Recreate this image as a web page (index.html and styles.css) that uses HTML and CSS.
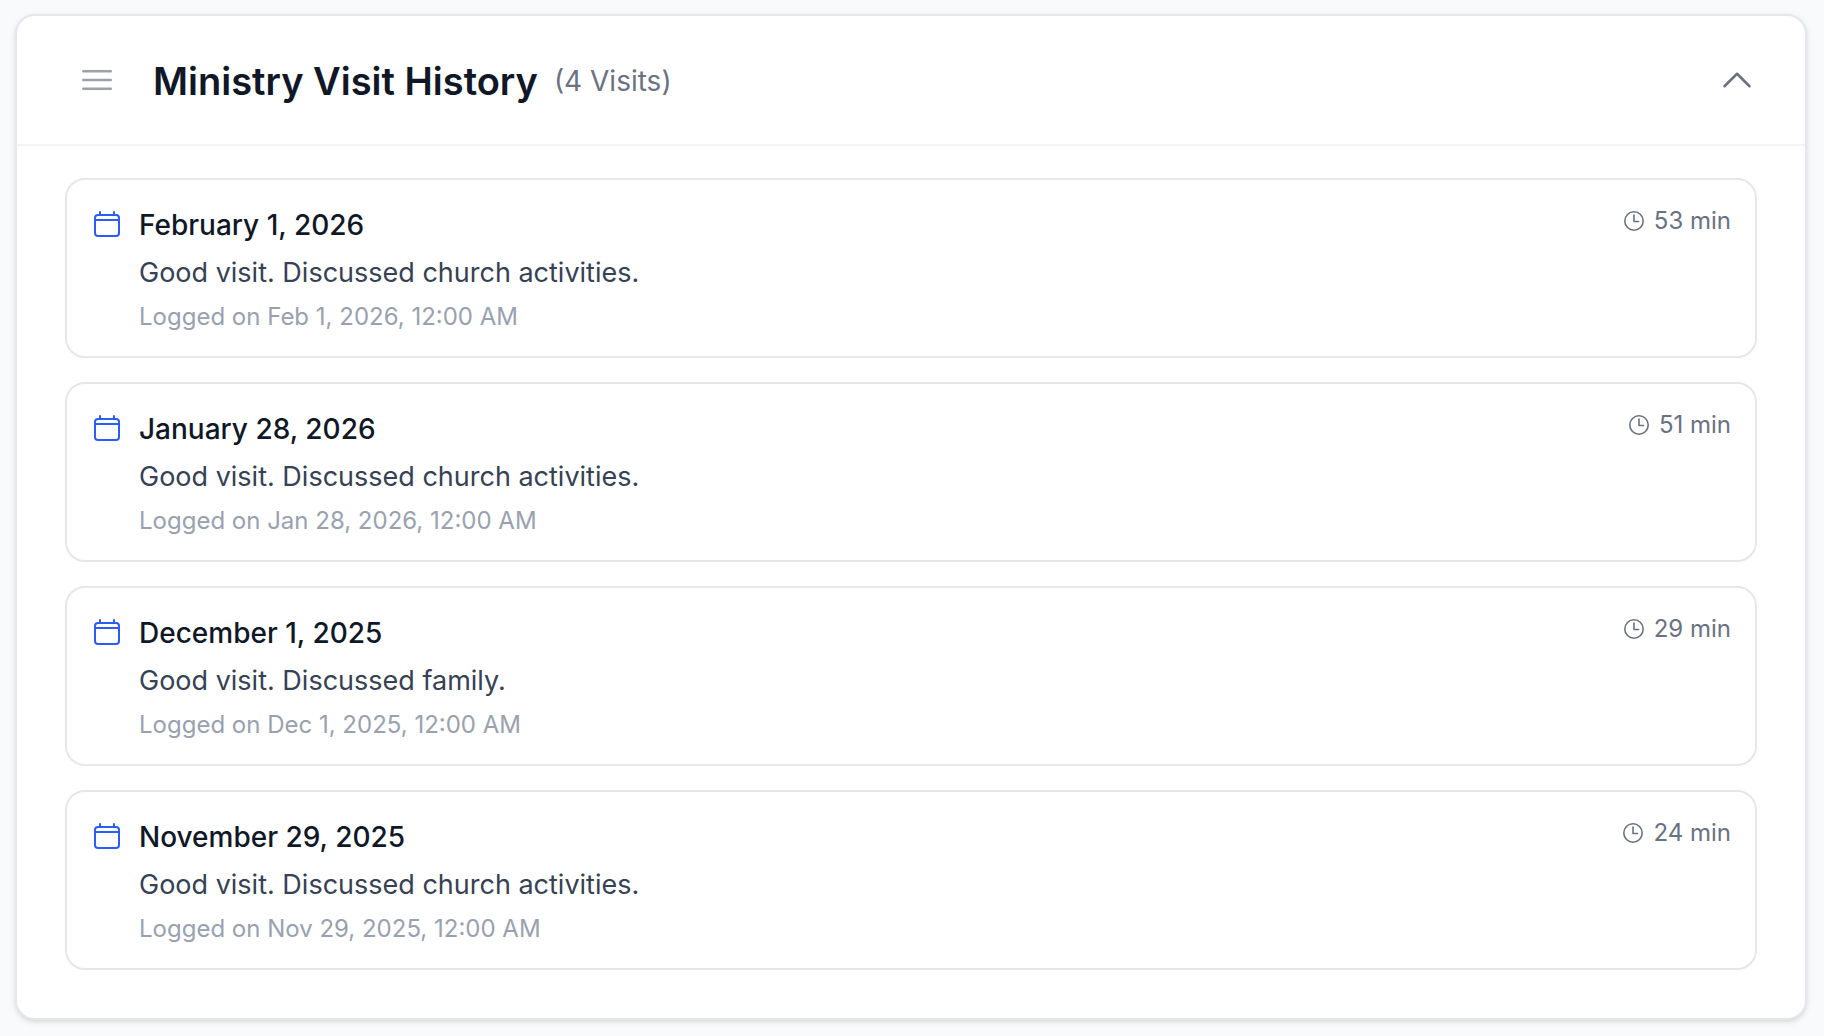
FILE: index.html
```html
<!DOCTYPE html>
<html lang="en">
<head>
    <meta charset="UTF-8">
    <meta name="viewport" content="width=device-width, initial-scale=1.0">
    <title>Ministry Visit History</title>
    <link rel="stylesheet" href="styles.css">
</head>
<body>

    <!-- Shared icons -->
    <svg class="icon-defs" aria-hidden="true">
        <symbol id="calendar" viewBox="0 0 32 32">
            <rect x="4" y="7" width="24" height="21" rx="3"></rect>
            <path d="M4 12h24M9 4v3M23 4v3"></path>
        </symbol>
        <symbol id="clock" viewBox="0 0 24 24">
            <circle cx="12" cy="12" r="9.2"></circle>
            <path d="M12 6v6.5h4.5"></path>
        </symbol>
    </svg>

    <section class="panel">
        <header class="panel-header">
            <button class="icon-button drag-handle" type="button" aria-label="Reorder section">
                <svg viewBox="0 0 24 24"><path d="M3.75 6.75h16.5M3.75 12h16.5M3.75 17.25h16.5"></path></svg>
            </button>
            <div class="panel-heading">
                <h2 class="panel-title">Ministry Visit History</h2>
                <span class="visit-count">(4 Visits)</span>
            </div>
            <button class="icon-button toggle" type="button" aria-label="Collapse section" aria-expanded="true">
                <svg viewBox="0 0 24 24"><path d="M4.5 15.75l7.5-7.5 7.5 7.5"></path></svg>
            </button>
        </header>

        <ul class="visit-list">
            <li class="visit">
                <svg class="calendar-icon"><use href="#calendar"></use></svg>
                <div class="visit-body">
                    <h3 class="visit-date">February 1, 2026</h3>
                    <p class="visit-notes">Good visit. Discussed church activities.</p>
                    <p class="visit-logged">Logged on Feb 1, 2026, 12:00 AM</p>
                </div>
                <div class="visit-duration">
                    <svg class="clock-icon"><use href="#clock"></use></svg>
                    <span>53 min</span>
                </div>
            </li>
            <li class="visit">
                <svg class="calendar-icon"><use href="#calendar"></use></svg>
                <div class="visit-body">
                    <h3 class="visit-date">January 28, 2026</h3>
                    <p class="visit-notes">Good visit. Discussed church activities.</p>
                    <p class="visit-logged">Logged on Jan 28, 2026, 12:00 AM</p>
                </div>
                <div class="visit-duration">
                    <svg class="clock-icon"><use href="#clock"></use></svg>
                    <span>51 min</span>
                </div>
            </li>
            <li class="visit">
                <svg class="calendar-icon"><use href="#calendar"></use></svg>
                <div class="visit-body">
                    <h3 class="visit-date">December 1, 2025</h3>
                    <p class="visit-notes">Good visit. Discussed family.</p>
                    <p class="visit-logged">Logged on Dec 1, 2025, 12:00 AM</p>
                </div>
                <div class="visit-duration">
                    <svg class="clock-icon"><use href="#clock"></use></svg>
                    <span>29 min</span>
                </div>
            </li>
            <li class="visit">
                <svg class="calendar-icon"><use href="#calendar"></use></svg>
                <div class="visit-body">
                    <h3 class="visit-date">November 29, 2025</h3>
                    <p class="visit-notes">Good visit. Discussed church activities.</p>
                    <p class="visit-logged">Logged on Nov 29, 2025, 12:00 AM</p>
                </div>
                <div class="visit-duration">
                    <svg class="clock-icon"><use href="#clock"></use></svg>
                    <span>24 min</span>
                </div>
            </li>
        </ul>
    </section>

</body>
</html>
```

FILE: styles.css
```css
* {
    box-sizing: border-box;
}

body {
    margin: 0;
    padding: 14px 17px 15px 15px;
    background-color: #f9fafb;
    color: #101828;
    font-family: Inter, sans-serif;
    font-size: 28px;
    line-height: 42px;
}

h2, h3, p, ul {
    margin: 0;
    padding: 0;
}

svg {
    display: block;
    flex-shrink: 0;
    fill: none;
    stroke: currentColor;
    stroke-linecap: round;
    stroke-linejoin: round;
}

.icon-defs {
    display: none;
}

.panel {
    background-color: #ffffff;
    border: 2px solid #e5e7eb;
    border-radius: 20px;
    box-shadow: 0 2px 6px rgba(0, 0, 0, 0.1), 0 2px 4px -2px rgba(0, 0, 0, 0.1);
}

.panel-header {
    display: flex;
    align-items: center;
    gap: 24px;
    padding: 32px 48px;
    border-bottom: 2px solid #f3f4f6;
}

.panel-heading {
    display: flex;
    flex: 1;
    align-items: center;
    gap: 16px;
    padding-top: 2px;
}

.panel-title {
    font-size: 38px;
    font-weight: 600;
    line-height: 56px;
}

.visit-count {
    color: #6a7282;
}

.icon-button {
    padding: 0;
    border: 0;
    background: none;
    cursor: pointer;
}

.icon-button svg {
    width: 40px;
    height: 40px;
    stroke-width: 1.5;
}

.drag-handle {
    padding: 12px;
    color: #99a1af;
    cursor: grab;
}

.toggle {
    color: #6a7282;
}

.visit-list {
    display: flex;
    flex-direction: column;
    gap: 24px;
    padding: 32px 48px 48px;
    list-style: none;
}

.visit {
    display: flex;
    align-items: flex-start;
    gap: 16px;
    padding: 24px 24px 22px;
    border: 2px solid #e5e7eb;
    border-radius: 20px;
}

.calendar-icon {
    width: 32px;
    height: 32px;
    margin-top: 4px;
    color: #2b5cf6;
    stroke-width: 2;
}

.visit-body {
    display: flex;
    flex: 1;
    flex-direction: column;
    gap: 6px;
}

.visit-date {
    font-size: 28px;
    font-weight: 500;
}

.visit-notes {
    color: #364153;
    font-size: 27px;
}

.visit-logged {
    color: #99a1af;
    font-size: 24px;
    line-height: 34px;
}

.visit-duration {
    display: flex;
    align-items: center;
    gap: 8px;
    color: #6a7282;
    font-size: 24px;
    line-height: 34px;
}

.clock-icon {
    width: 24px;
    height: 24px;
    stroke-width: 1.6;
}
```
